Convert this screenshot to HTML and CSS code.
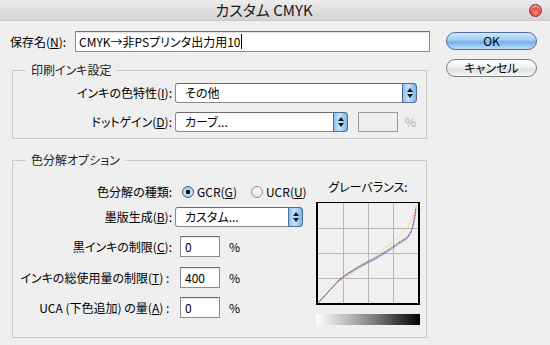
FILE: index.html
```html
<!DOCTYPE html>
<html lang="ja">
<head>
  <meta charset="UTF-8">
  <title>カスタム CMYK</title>
  <link rel="stylesheet" href="styles.css">
</head>
<body>
  <div class="titlebar">
    <span></span>
    <span class="title">カスタム CMYK</span>
    <span class="close"></span>
  </div>

  <div class="content">
    <div class="main">
      <div class="name-row">
        <label class="name-label">保存名(<u>N</u>):</label>
        <div class="textbox name-box">CMYK→非PSプリンタ出力用10<span class="caret"></span></div>
      </div>

      <fieldset class="group ink-group">
        <legend>印刷インキ設定</legend>
        <div class="row first">
          <label class="lbl">インキの色特性(<u>I</u>):</label>
          <div class="select sel-wide">その他<span class="stepper"><i class="up"></i><i class="down"></i></span></div>
        </div>
        <div class="row second">
          <label class="lbl">ドットゲイン(<u>D</u>):</label>
          <div class="select sel-mid">カーブ...<span class="stepper"><i class="up"></i><i class="down"></i></span></div>
          <div class="textbox disabled-box"></div>
          <span class="pct dim">%</span>
        </div>
      </fieldset>

      <fieldset class="group sep-group">
        <legend>色分解オプション</legend>
        <div class="sep-body">
          <div class="sep-left">
            <div class="row radio-row">
              <label class="lbl">色分解の種類:</label>
              <span class="radio on"></span><span class="radio-text">GCR(<u>G</u>)</span>
              <span class="radio off"></span><span class="radio-text">UCR(<u>U</u>)</span>
            </div>
            <div class="row gap5">
              <label class="lbl">墨版生成(<u>B</u>):</label>
              <div class="select sel-short">カスタム...<span class="stepper"><i class="up"></i><i class="down"></i></span></div>
            </div>
            <div class="row gap9">
              <label class="lbl">黒インキの制限(<u>C</u>):</label>
              <div class="textbox num">0</div>
              <span class="pct">%</span>
            </div>
            <div class="row gap10">
              <label class="lbl">インキの総使用量の制限(<u>T</u>) :&nbsp;</label>
              <div class="textbox num">400</div>
              <span class="pct">%</span>
            </div>
            <div class="row gap9">
              <label class="lbl">UCA (下色追加) の量(<u>A</u>) :&nbsp;</label>
              <div class="textbox num">0</div>
              <span class="pct">%</span>
            </div>
          </div>

          <div class="sep-right">
            <div class="gray-title">グレーバランス:</div>
            <div class="graph">
              <svg width="100" height="100" viewBox="0 0 100 100">
                <g stroke="#b8b8b8" stroke-width="1">
                  <line x1="25.5" y1="0" x2="25.5" y2="100"/>
                  <line x1="50.5" y1="0" x2="50.5" y2="100"/>
                  <line x1="75.5" y1="0" x2="75.5" y2="100"/>
                  <line x1="0" y1="25.5" x2="100" y2="25.5"/>
                  <line x1="0" y1="50.5" x2="100" y2="50.5"/>
                  <line x1="0" y1="75.5" x2="100" y2="75.5"/>
                </g>
                <g fill="none" stroke-width="1" stroke-dasharray="1 0.5">
                  <polyline stroke="#f2d25a" points="20,79 28,75 37,68 48,61 58,53 71,42 81,34 91,23 96,11 99,1"/>
                  <polyline stroke="#2fb0d8" points="0,100 10,89 21,78 29,72 42,64 58,56 71,48 81,41 89,36 93,30 96,20 98,6"/>
                  <polyline stroke="#c2308a" points="1,99 11,88 21,77 29,71 42,63 58,55 71,47 81,40 89,35 93,29 95,22 97,12 98,4"/>
                  <polyline stroke="#4a2468" stroke-dasharray="0.6 1.4" points="2,98 12,87 22,76 30,70 43,62 58,54 71,46 81,39 89,34 93,28"/>
                </g>
              </svg>
            </div>
            <div class="ramp"></div>
          </div>
        </div>
      </fieldset>
    </div>

    <div class="buttons">
      <div class="btn default">OK</div>
      <div class="btn">キャンセル</div>
    </div>
  </div>
</body>
</html>
```

FILE: styles.css
```css
* {
  box-sizing: border-box;
}

body {
  margin: 0;
  background: #efefef;
  font-family: "Noto Sans CJK JP", "Noto Sans", sans-serif;
  font-size: 12px;
  color: #000;
  font-feature-settings: "palt";
  line-height: 16px;
}

u {
  text-decoration: underline;
  text-underline-offset: 1px;
}

.titlebar {
  height: 21px;
  display: grid;
  grid-template-columns: 1fr auto 1fr;
  align-items: center;
  padding-right: 22px;
  background: linear-gradient(#ececec, #d4d4d4);
  border-bottom: 1px solid #c9c9c9;
}

.title {
  font-size: 15px;
  line-height: 18px;
  color: #1a1a1a;
}

.close {
  justify-self: end;
  margin-right: -14px;
  width: 13px;
  height: 13px;
  border-radius: 50%;
  border: 1px solid #8a2a22;
  background: radial-gradient(circle at 50% 70%, #ff9a88 0%, #e8463a 45%, #b0201a 100%);
  box-shadow: inset 0 2px 2px rgba(255, 255, 255, 0.6);
}

.content {
  display: flex;
  padding: 10px 13px 0 10px;
}

.main {
  width: 420px;
}

.name-row {
  display: flex;
  align-items: center;
  height: 21px;
}

.name-label {
  width: 65px;
}

.textbox {
  background: #fff;
  border: 1px solid #8c8c8c;
  border-top-color: #6e6e6e;
  box-shadow: inset 0 1px 1px rgba(0, 0, 0, 0.12);
  display: flex;
  align-items: center;
}

.name-box {
  width: 355px;
  height: 21px;
  padding-left: 3px;
}

.caret {
  width: 1px;
  height: 15px;
  background: #000;
  margin-left: 1px;
}

.group {
  margin: 0;
  min-width: 0;
  width: 415px;
  border: 1px solid #c9c9c9;
  padding: 0;
}

.group legend {
  margin-left: 13px;
  padding: 0 5px;
  line-height: 16px;
  color: #1e1e1e;
}

.ink-group {
  margin: 10px 0 0 2px;
  padding-bottom: 6px;
}

.sep-group {
  margin: 13px 0 0 2px;
  padding: 0 6px 12px 0;
}

.row {
  display: flex;
  align-items: center;
}

.ink-group .first {
  margin-top: 5px;
}

.ink-group .second {
  margin-top: 9px;
}

.lbl {
  width: 159px;
  flex: none;
  text-align: right;
  white-space: nowrap;
}

.select {
  position: relative;
  height: 20px;
  margin-left: 3px;
  padding-left: 9px;
  display: flex;
  align-items: center;
  background: #fff;
  border: 1px solid #8a8a8a;
  border-top-color: #6a6a6a;
  border-radius: 3px 4px 4px 3px;
}

.sel-wide { width: 242px; }
.sel-mid { width: 173px; }
.sel-short { width: 132px; }

.stepper {
  position: absolute;
  right: -1px;
  top: -1px;
  bottom: -1px;
  width: 15px;
  border: 1px solid #4a6f9c;
  border-radius: 0 4px 4px 0;
  background: linear-gradient(to right, #8fc0ee, #c9e3fb 40%, #7fb5ea);
  display: flex;
  flex-direction: column;
  align-items: center;
  justify-content: center;
  gap: 2px;
}

.stepper i {
  width: 0;
  height: 0;
  border-left: 3px solid transparent;
  border-right: 3px solid transparent;
}

.stepper .up { border-bottom: 4px solid #1c1c1c; }
.stepper .down { border-top: 4px solid #1c1c1c; }

.disabled-box {
  width: 40px;
  height: 20px;
  margin-left: 10px;
  background: #efefef;
  border-color: #9a9a9a;
  box-shadow: none;
}

.pct {
  margin-left: 9px;
}

.pct.dim {
  margin-left: 7px;
  color: #b0b0b0;
}

.sep-body {
  display: flex;
  align-items: flex-start;
}

.sep-left {
  width: 290px;
  padding-top: 14px;
}

.radio-row {
  height: 20px;
}

.radio {
  width: 12px;
  height: 12px;
  border-radius: 50%;
  margin-left: 10px;
  flex: none;
}

.radio.on {
  border: 1px solid #3d5f8a;
  background: radial-gradient(circle, #111 0, #111 2px, transparent 2.5px),
    linear-gradient(#8ec1ee, #cde6fc 60%, #9ccaf3);
}

.radio.off {
  margin-left: 14px;
  border: 1px solid #8a8a8a;
  background: linear-gradient(#fdfdfd, #e6e6e6);
}

.radio-text {
  margin-left: 3px;
}

.gap5 { margin-top: 5px; }
.gap9 { margin-top: 9px; }
.gap10 { margin-top: 10px; }

.num {
  width: 40px;
  height: 21px;
  margin-left: 8px;
  padding-left: 4px;
}

.sep-right {
  width: 104px;
  margin-left: 13px;
  padding-top: 11px;
}

.gray-title {
  text-align: center;
  line-height: 16px;
}

.graph {
  margin-top: 7px;
  width: 104px;
  height: 103px;
  border: 2px solid #000;
  border-top-width: 1px;
  background: #f0f0f0;
}

.graph svg {
  display: block;
}

.ramp {
  margin-top: 9px;
  height: 11px;
  background: linear-gradient(to right, #fff, #c8c8c8 25%, #808080 55%, #000);
}

.buttons {
  margin-left: 16px;
  padding-top: 1px;
  display: flex;
  flex-direction: column;
  gap: 9px;
}

.btn {
  width: 91px;
  height: 18px;
  border-radius: 9px;
  border: 1px solid #7d7d7d;
  background: linear-gradient(#ffffff, #f1f1f1 50%, #dedede 55%, #f7f7f7);
  text-align: center;
  line-height: 16px;
}

.btn.default {
  border-color: #4b6f9e;
  background: linear-gradient(#d3e8fc, #9fcbf3 45%, #74b0ea 55%, #b9defc);
}
```
